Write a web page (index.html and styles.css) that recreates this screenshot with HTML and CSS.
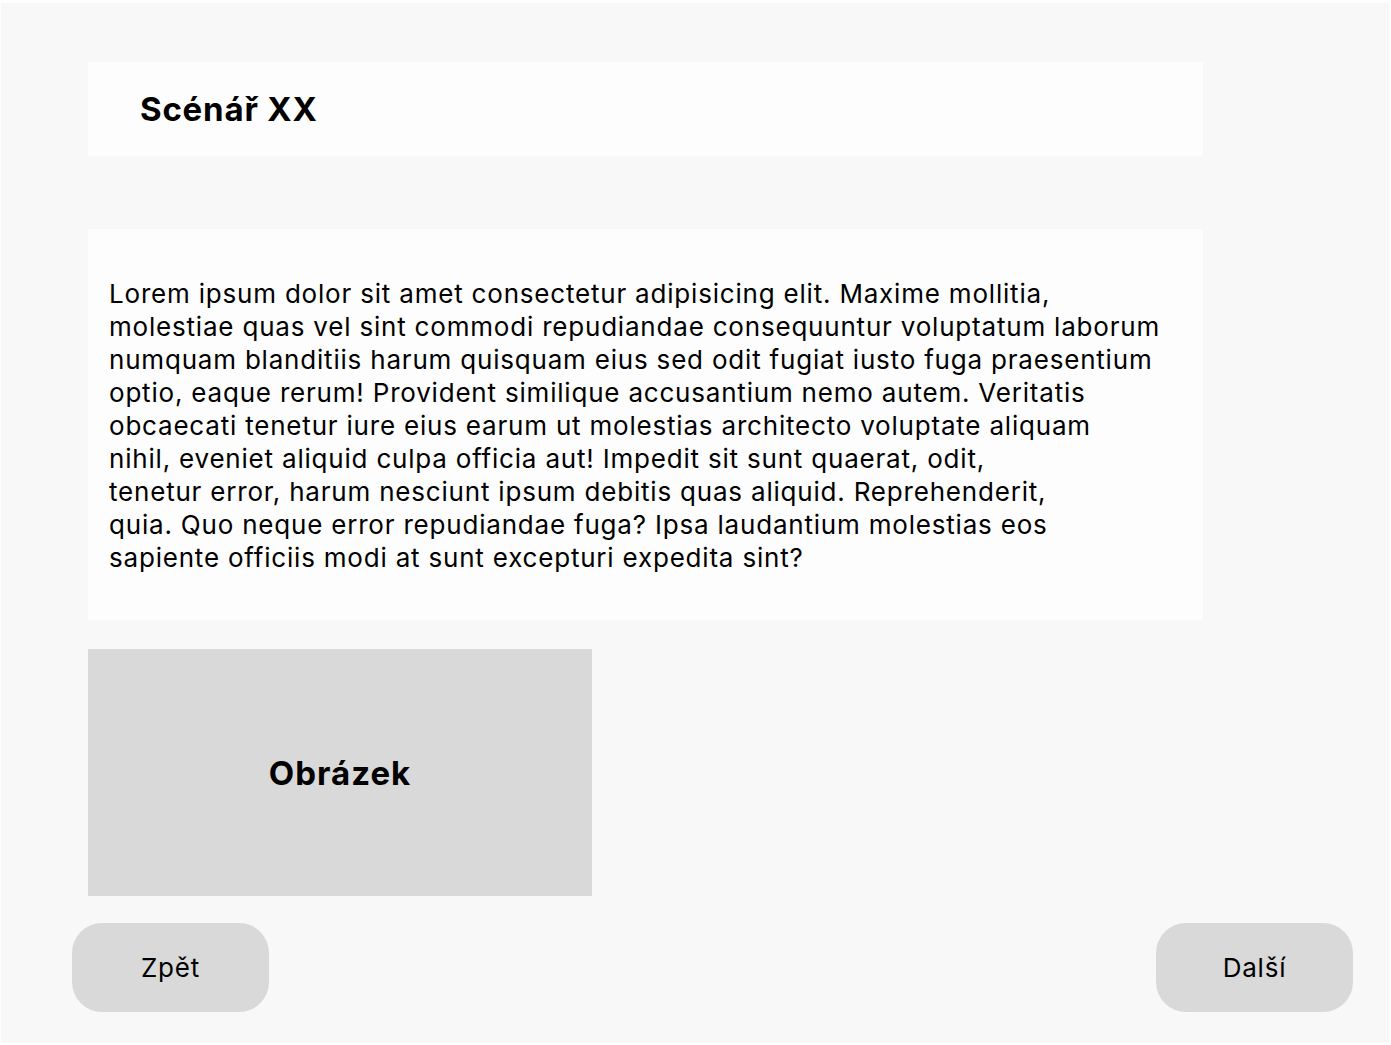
FILE: index.html
```html
<!DOCTYPE html>
<html lang="cs">
<head>
<meta charset="utf-8">
<title>Scénář XX</title>
<link rel="stylesheet" href="styles.css">
</head>
<body>
<div class="frame">
  <main class="content">
    <header class="card header">
      <h1 class="title">Scénář XX</h1>
    </header>
    <section class="card text">
      <p>Lorem ipsum dolor sit amet consectetur adipisicing elit. Maxime mollitia,<br>
      molestiae quas vel sint commodi repudiandae consequuntur voluptatum laborum<br>
      numquam blanditiis harum quisquam eius sed odit fugiat iusto fuga praesentium<br>
      optio, eaque rerum! Provident similique accusantium nemo autem. Veritatis<br>
      obcaecati tenetur iure eius earum ut molestias architecto voluptate aliquam<br>
      nihil, eveniet aliquid culpa officia aut! Impedit sit sunt quaerat, odit,<br>
      tenetur error, harum nesciunt ipsum debitis quas aliquid. Reprehenderit,<br>
      quia. Quo neque error repudiandae fuga? Ipsa laudantium molestias eos<br>
      sapiente officiis modi at sunt excepturi expedita sint?</p>
    </section>
    <div class="image">Obrázek</div>
  </main>
  <nav class="buttons">
    <button class="btn">Zpět</button>
    <button class="btn">Další</button>
  </nav>
</div>
</body>
</html>
```

FILE: styles.css
```css
html, body {
  margin: 0;
  padding: 0;
  background: #fefefe;
}
body {
  font-family: Inter, "Noto Sans", sans-serif;
  color: #000;
  padding: 3px 2px 2px 1px;
}
.frame {
  background: #f8f8f8;
  height: 1040px;
  box-sizing: border-box;
  padding-top: 59px;
  display: flex;
  flex-direction: column;
}
.content {
  margin-left: 87px;
  width: 1115px;
  display: flex;
  flex-direction: column;
}
.card {
  background: #fdfdfd;
}
.header {
  height: 94px;
  display: flex;
  align-items: center;
  padding-left: 52px;
}
.title {
  margin: 0;
  font-size: 33px;
  font-weight: 700;
  letter-spacing: 0.8px;
}
.text {
  margin-top: 73px;
  padding: 48px 21px 46px;
}
.text p {
  margin: 0;
  font-size: 26px;
  line-height: 33px;
  letter-spacing: 0.8px;
}
.image {
  margin-top: 29px;
  width: 504px;
  height: 247px;
  background: #d9d9d9;
  display: flex;
  align-items: center;
  justify-content: center;
  font-size: 33px;
  font-weight: 700;
  letter-spacing: 1px;
}
.buttons {
  margin-top: 27px;
  margin-left: 71px;
  margin-right: 36px;
  display: flex;
  justify-content: space-between;
}
.btn {
  width: 197px;
  height: 89px;
  border: none;
  border-radius: 30px;
  background: #d9d9d9;
  font-family: inherit;
  font-size: 26px;
  letter-spacing: 0.8px;
  color: #000;
  padding: 0;
}
```
